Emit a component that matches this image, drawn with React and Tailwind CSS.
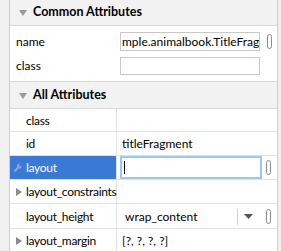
import React from "react";

const font = { fontFamily: 'Lato, "Noto Sans", sans-serif' };

function TriDown() {
  return (
    <svg width="8" height="6" viewBox="0 0 8 6" className="shrink-0">
      <polygon points="0,0 8,0 4,6" fill="#9a9a9a" />
    </svg>
  );
}
function TriRight() {
  return (
    <svg width="6" height="8" viewBox="0 0 6 8" className="shrink-0">
      <polygon points="0,0 6,4 0,8" fill="#8a8a8a" />
    </svg>
  );
}
function Ellipsis() {
  return <div className="w-[5px] h-[15px] rounded-full border border-[#8c8c8c]" />;
}
function Wrench() {
  return (
    <svg width="9" height="10" viewBox="0 0 9 10" className="shrink-0">
      <path
        d="M6.5 0.5 A2.6 2.6 0 0 0 4.2 4.1 L0.6 7.8 L1.9 9.2 L5.5 5.5 A2.6 2.6 0 0 0 8.8 3 L7.3 3.6 L6 2.3 L6.8 0.6 Z"
        fill="#8fa9d6"
      />
    </svg>
  );
}

function Header({ title, h, extra = "" }) {
  return (
    <div className={`${h} ${extra} flex items-center gap-[6px] pl-[9px] bg-[#f2f2f2] border-b border-[#d9d9d9] shrink-0`}>
      <TriDown />
      <span className="text-[12.5px] font-bold text-black leading-none">{title}</span>
    </div>
  );
}

function Row({ left, right, h, selected, icon }) {
  return (
    <div className={`${h} flex border-b border-[#e3e3e3] shrink-0`}>
      <div
        className={`w-[107px] shrink-0 flex items-center border-r border-[#e3e3e3] pt-[1px] ${
          selected ? "bg-[#3b79d6] text-white" : "text-black"
        }`}
      >
        <div className="w-[16px] flex justify-end pr-[4px] shrink-0">{icon}</div>
        <span className="text-[12px] leading-none whitespace-nowrap tracking-[-0.3px]">{left}</span>
      </div>
      <div className="flex-1 flex items-center min-w-0 pt-[1px]">{right}</div>
    </div>
  );
}

export default function App() {
  return (
    <div className="w-[281px] h-[251px] flex bg-[#f0f0f0] overflow-hidden" style={font}>
      <div className="w-[10px] shrink-0 border-r border-[#cfcfcf]" />
      <div className="w-[268px] shrink-0 flex flex-col bg-white border-r border-[#cfcfcf]">
        <Header title="Common Attributes" h="h-[26px]" />
        <div className="flex flex-col gap-[6px] pt-[6px] pb-[6px] border-b border-[#d9d9d9] shrink-0">
          <div className="h-[19px] flex items-center">
            <span className="w-[110px] pl-[6px] text-[12px] leading-none text-black shrink-0">name</span>
            <div className="w-[140px] h-[19px] border border-[#c8c8c8] overflow-hidden flex items-center">
              <span className="text-[12px] leading-none whitespace-nowrap text-black pl-[1px]">
                mple.animalbook.TitleFragment
              </span>
            </div>
            <div className="ml-[7px]">
              <Ellipsis />
            </div>
          </div>
          <div className="h-[18px] flex items-center">
            <span className="w-[110px] pl-[6px] text-[12px] leading-none text-black shrink-0">class</span>
            <div className="w-[140px] h-[18px] border border-[#c8c8c8]" />
          </div>
        </div>
        <Header title="All Attributes" h="h-[27px]" extra="pt-[1px]" />
        <Row h="h-[23px]" left="class" right={null} />
        <Row
          h="h-[24px]"
          left="id"
          right={<span className="pl-[5px] text-[12px] leading-none text-black">titleFragment</span>}
        />
        <Row
          h="h-[24px]"
          selected
          icon={<Wrench />}
          left="layout"
          right={
            <div className="flex items-center w-full -mt-[1px]">
              <div className="ml-[3px] w-[142px] h-[23px] border-2 border-[#9ec6ee] flex items-center pl-[2px]">
                <div className="w-px h-[13px] bg-black" />
              </div>
              <div className="ml-[4px]">
                <Ellipsis />
              </div>
            </div>
          }
        />
        <Row h="h-[24px]" icon={<TriRight />} left="layout_constraints" right={null} />
        <Row
          h="h-[25px]"
          left="layout_height"
          right={
            <div className="flex items-center w-full">
              <span className="pl-[8px] w-[120px] shrink-0 text-[12px] leading-none text-black">wrap_content</span>
              <div className="w-px h-[16px] bg-[#d0d0d0] shrink-0" />
              <svg width="9" height="5" viewBox="0 0 9 5" className="ml-[6px] shrink-0">
                <polygon points="0,0 9,0 4.5,5" fill="#555" />
              </svg>
              <div className="ml-[13px]">
                <Ellipsis />
              </div>
            </div>
          }
        />
        <Row
          h="h-[24px]"
          icon={<TriRight />}
          left="layout_margin"
          right={<span className="pl-[5px] text-[12px] leading-none text-black">[?, ?, ?, ?]</span>}
        />
      </div>
      <div className="flex-1" />
    </div>
  );
}
